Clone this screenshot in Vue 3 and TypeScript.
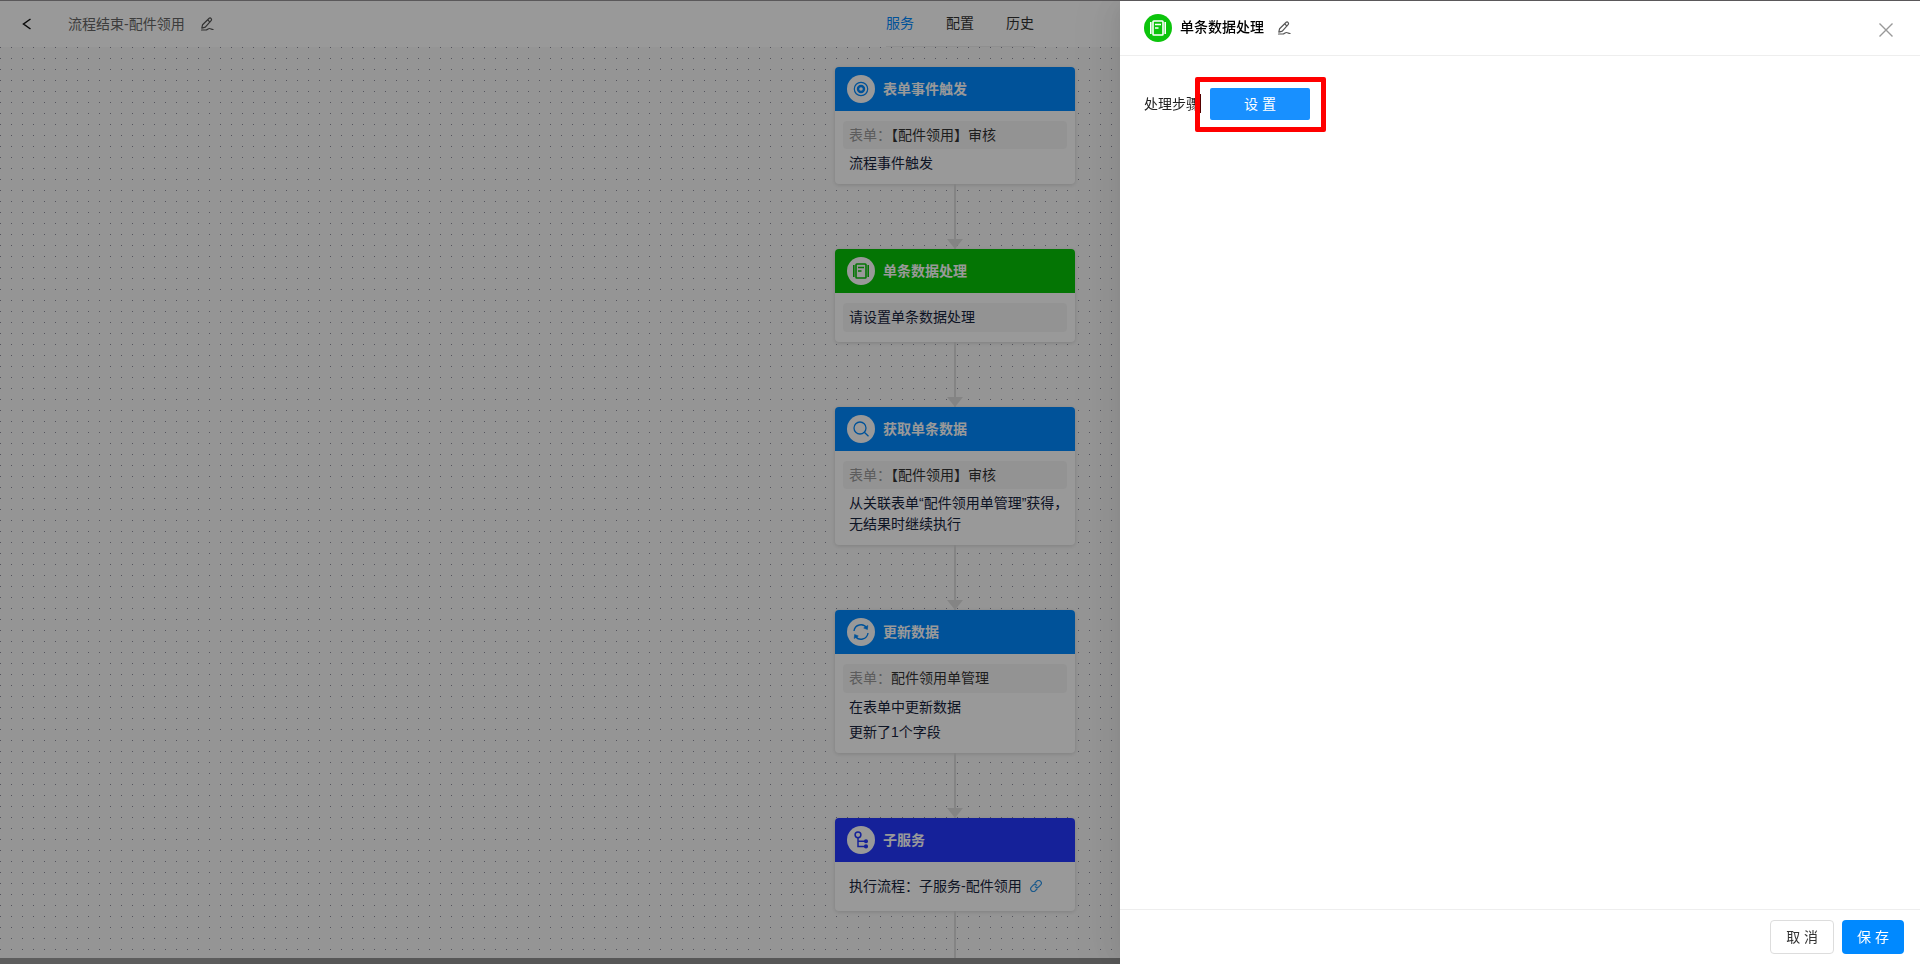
<script setup lang="ts">
import { ref } from 'vue'

type IconName = 'target' | 'book' | 'search' | 'sync' | 'branch'

interface FlowNode {
  title: string
  icon: IconName
  tone: 'blue' | 'green' | 'indigo'
  form?: string
  compact?: boolean
  note?: string
  lines?: string[]
  flow?: string
}

const tabs = ['服务', '配置', '历史']
const activeTab = ref('服务')
const drawerOpen = ref(true)

const nodes: FlowNode[] = [
  { title: '表单事件触发', icon: 'target', tone: 'blue', form: '【配件领用】审核', compact: true, lines: ['流程事件触发'] },
  { title: '单条数据处理', icon: 'book', tone: 'green', note: '请设置单条数据处理' },
  { title: '获取单条数据', icon: 'search', tone: 'blue', form: '【配件领用】审核', compact: true, lines: ['从关联表单“配件领用单管理”获得，\n无结果时继续执行'] },
  { title: '更新数据', icon: 'sync', tone: 'blue', form: '配件领用单管理', lines: ['在表单中更新数据', '更新了1个字段'] },
  { title: '子服务', icon: 'branch', tone: 'indigo', flow: '子服务-配件领用' },
]
</script>

<template>
  <div class="page">
    <header class="topbar">
      <div class="crumb">
        <button class="icon-btn back" aria-label="返回">
          <svg width="10" height="12" viewBox="0 0 10 12"><path d="M8.5 1 1.5 6l7 5" fill="none" stroke="currentColor" stroke-width="1.5" /></svg>
        </button>
        <span class="flow-name">流程结束-配件领用</span>
        <button class="icon-btn" aria-label="重命名">
          <svg width="14" height="14" viewBox="0 0 14 14" fill="none" stroke="currentColor" stroke-width="1.2" stroke-linecap="round" stroke-linejoin="round">
            <path d="M9.2 1.2a1.2 1.2 0 0 1 1.7.2l.4.5a1.2 1.2 0 0 1-.2 1.7L5.3 10.2 1.8 11.2 2.6 7.7zM7.7 2.7l2.1 2.5M1.5 13h4.300c1.500 0 2.200-1.500 3.700-1.500 1.400 0 1.800 1 3.600 1" />
          </svg>
        </button>
      </div>
      <nav class="tabs">
        <button v-for="tab in tabs" :key="tab" class="tab" :class="{ active: tab === activeTab }" @click="activeTab = tab">{{ tab }}</button>
      </nav>
      <div></div>
    </header>

    <main class="canvas">
      <div class="flow">
        <template v-for="(node, index) in nodes" :key="node.title">
          <div v-if="index > 0" class="link"><i class="arrow"></i></div>
          <section class="card">
            <h3 class="card-head" :class="node.tone">
              <span class="badge">
                <svg v-if="node.icon === 'target'" width="16" height="16" viewBox="0 0 16 16" fill="none" stroke="currentColor">
                  <circle cx="8" cy="8" r="6.7" stroke-width="1.2" /><circle cx="8" cy="8" r="3" stroke-width="2.4" />
                </svg>
                <svg v-else-if="node.icon === 'book'" width="16" height="16" viewBox="0 0 16 16" fill="none" stroke="currentColor">
                  <path d="M.8 2v12M15.2 2v12" stroke-width="1.600" /><rect x="3" y="1" width="10" height="14" rx=".8" stroke-width="1.600" /><path d="M5 4.500h6M5 8h3.500" stroke-width="1.300" />
                </svg>
                <svg v-else-if="node.icon === 'search'" width="16" height="16" viewBox="0 0 16 16" fill="none" stroke="currentColor" stroke-width="1.3">
                  <circle cx="7" cy="7" r="6" /><path d="m11.3 11.3 4.2 4" />
                </svg>
                <svg v-else-if="node.icon === 'sync'" width="18" height="18" viewBox="0 0 18 18" fill="none" stroke="currentColor" stroke-width="1.4">
                  <path d="M2 8a7 7 0 0 1 12.8-3M16 10a7 7 0 0 1-12.8 3" /><path d="m15.800 2.500-.4 4-3.700-1.500zM2.200 15.500l.4-4 3.700 1.500z" fill="currentColor" stroke-width=".6" />
                </svg>
                <svg v-else width="16" height="18" viewBox="0 0 16 18" fill="none" stroke="currentColor" stroke-width="1.5">
                  <circle cx="5" cy="3.8" r="2.9" /><path d="M5 6.7v8.7h7M5 10.3h7" /><circle cx="13" cy="10.3" r="1.3" fill="currentColor" /><circle cx="13" cy="15.4" r="1.3" fill="currentColor" />
                </svg>
              </span>
              {{ node.title }}
            </h3>
            <div class="card-body">
              <p v-if="node.form" class="row tinted" :class="{ compact: node.compact }"><span class="key">表单：</span>{{ node.form }}</p>
              <p v-if="node.note" class="row tinted ink">{{ node.note }}</p>
              <p v-for="line in node.lines" :key="line" class="line">{{ line }}</p>
              <p v-if="node.flow" class="row ink">
                执行流程：{{ node.flow }}
                <a href="#" class="open" aria-label="打开子服务">
                  <svg width="12" height="12" viewBox="0 0 12 12" fill="none" stroke="currentColor" stroke-width="1.2" stroke-linecap="round">
                    <path d="M5 3 6.8 1.2a2.5 2.5 0 0 1 3.8.2 2.5 2.5 0 0 1 0 3.5L8.8 6.800a2.500 2.500 0 0 1-3.500 0M7 9l-1.800 1.800a2.500 2.500 0 0 1-3.800-.2 2.500 2.500 0 0 1 0-3.500L3.200 5.200a2.500 2.500 0 0 1 3.500 0" />
                  </svg>
                </a>
              </p>
            </div>
          </section>
        </template>
        <div class="link tail"></div>
      </div>
    </main>
    <div class="scroll-strip"><div class="thumb"></div></div>
  </div>

  <template v-if="drawerOpen">
    <div class="mask"></div>
    <aside class="drawer" role="dialog" aria-labelledby="drawer-title">
      <header class="drawer-head">
        <span class="badge solid">
          <svg width="16" height="16" viewBox="0 0 16 16" fill="none" stroke="currentColor">
            <path d="M.8 2v12M15.2 2v12" stroke-width="1.6" /><rect x="3" y="1" width="10" height="14" rx=".8" stroke-width="1.6" /><path d="M5 4.5h6M5 8h3.5" stroke-width="1.3" />
          </svg>
        </span>
        <h2 id="drawer-title">单条数据处理</h2>
        <button class="icon-btn rename" aria-label="重命名">
          <svg width="14" height="14" viewBox="0 0 14 14" fill="none" stroke="currentColor" stroke-width="1.2" stroke-linecap="round" stroke-linejoin="round">
            <path d="M9.2 1.2a1.2 1.2 0 0 1 1.7.2l.4.5a1.2 1.2 0 0 1-.2 1.7L5.3 10.2 1.8 11.2 2.6 7.7zM7.7 2.7l2.1 2.5M1.5 13h4.3c1.500 0 2.200-1.500 3.700-1.500 1.400 0 1.800 1 3.600 1" />
          </svg>
        </button>
        <button class="icon-btn close" aria-label="关闭" @click="drawerOpen = false">
          <svg width="14" height="14" viewBox="0 0 14 14"><path d="m.5.5 13 13m0-13-13 13" fill="none" stroke="currentColor" stroke-width="1.4" /></svg>
        </button>
      </header>
      <div class="drawer-body">
        <label for="step-setup">处理步骤</label>
        <div class="setup">
          <button id="step-setup" class="set-btn">设 置</button>
          <span class="marker"></span>
        </div>
      </div>
      <footer class="drawer-foot">
        <button class="btn">取 消</button>
        <button class="btn primary">保 存</button>
      </footer>
    </aside>
  </template>
  <div class="window-edge"></div>
</template>

<style>
body {
  margin: 0;
  overflow: hidden;
}
</style>

<style scoped>
.page,
.drawer {
  font-family: "Liberation Sans", "Noto Sans CJK SC", sans-serif;
  font-size: 14px;
  line-height: 21px;
  box-sizing: border-box;
}
.page {
  display: flex;
  flex-direction: column;
  height: 100vh;
  padding-top: 1px;
  background: #fff;
}
button {
  font: inherit;
  cursor: pointer;
}
.icon-btn {
  display: flex;
  padding: 0;
  border: 0;
  background: none;
  color: #555;
}
.topbar {
  display: grid;
  grid-template-columns: 1fr auto 1fr;
  flex: none;
  height: 46px;
}
.crumb {
  display: flex;
  align-items: center;
  padding-left: 22px;
}
.crumb .back {
  margin-right: 36px;
  color: #111;
}
.flow-name {
  margin-right: 15px;
  color: #666;
}
.tabs {
  display: flex;
  gap: 32px;
  border-bottom: 1px solid #eee;
  box-sizing: border-box;
}
.tab {
  padding: 0;
  border: 0;
  background: none;
  color: #333;
}
.tab.active {
  color: #0089ff;
}
.canvas {
  flex: 1;
  min-height: 0;
  overflow: hidden;
  background: #f9f9f9 conic-gradient(from 270deg at 1px 1px, #8c8c9c 90deg, transparent 0) 0 0 / 11px 11px;
}
.flow {
  display: flex;
  flex-direction: column;
  align-items: center;
  height: 100%;
  padding-top: 20px;
  padding-right: 10px;
  box-sizing: border-box;
}
.card {
  flex: none;
  width: 240px;
  border-radius: 4px;
  background: #fff;
  box-shadow: 0 1px 4px rgba(0, 0, 0, 0.15);
}
.card-head {
  display: flex;
  align-items: center;
  gap: 8px;
  height: 44px;
  margin: 0;
  padding: 0 12px;
  box-sizing: border-box;
  border-radius: 4px 4px 0 0;
  color: #fff;
  font-size: 14px;
  font-weight: 700;
}
.badge {
  display: flex;
  align-items: center;
  justify-content: center;
  width: 28px;
  height: 28px;
  border-radius: 50%;
  background: #fff;
}
.blue {
  background: #0089ff;
}
.green {
  background: #07c307;
}
.indigo {
  background: #2338ff;
}
.blue .badge {
  color: #0089ff;
}
.green .badge {
  color: #07c307;
}
.indigo .badge {
  color: #2338ff;
}
.card-body {
  display: flex;
  flex-direction: column;
  gap: 4px;
  padding: 10px 8px;
}
.row,
.line {
  margin: 0;
  padding: 0 6px;
  white-space: nowrap;
  color: #333;
}
.row {
  padding: 4px 6px;
}
.row.compact {
  line-height: 20px;
}
.tinted {
  border-radius: 4px;
  background: #f6f6f6;
}
.line,
.ink {
  color: #17233d;
}
.line {
  white-space: pre;
}
.key {
  color: #999;
}
.open {
  margin-left: 4px;
  color: #2f96e8;
}
.open svg {
  vertical-align: -1px;
}
.link {
  position: relative;
  flex: none;
  width: 2px;
  height: 65px;
  background: #dcdcdc;
}
.link.tail {
  flex: 1;
}
.arrow {
  position: absolute;
  bottom: 0;
  left: -7px;
  border: 8px solid transparent;
  border-top: 10px solid #dcdcdc;
  border-bottom: 0;
}
.scroll-strip {
  flex: none;
  height: 6px;
  background: #919191;
}
.thumb {
  width: 220px;
  height: 100%;
  background: #9b9b9b;
}
.mask {
  position: fixed;
  inset: 0;
  background: rgba(0, 0, 0, 0.4);
}
.window-edge {
  position: fixed;
  inset: 0 0 auto;
  height: 1px;
  background: #5a585a;
}
.drawer {
  position: fixed;
  top: 0;
  right: 0;
  bottom: 0;
  display: flex;
  flex-direction: column;
  width: 800px;
  max-width: 100%;
  background: #fff;
  box-shadow: -6px 0 16px -8px rgba(0, 0, 0, 0.08), -9px 0 28px rgba(0, 0, 0, 0.05), -12px 0 48px 16px rgba(0, 0, 0, 0.03);
}
.drawer-head {
  display: flex;
  align-items: center;
  height: 56px;
  padding: 0 27px 0 24px;
  box-sizing: border-box;
  border-bottom: 1px solid #eee;
}
.badge.solid {
  background: #0cc40c;
  color: #fff;
}
h2 {
  margin: 0 13px 0 8px;
  color: #000;
  font-size: 14px;
  font-weight: 500;
}
.close {
  margin-left: auto;
  padding-top: 4px;
  color: #999;
}
.drawer-body {
  display: flex;
  flex: 1;
  align-items: flex-start;
  padding: 32px 24px;
  line-height: 32px;
  color: #222;
}
.setup {
  position: relative;
  margin-left: 10px;
}
.set-btn {
  display: block;
  width: 100px;
  height: 32px;
  padding: 0;
  border: 0;
  border-radius: 2px;
  background: #1890ff;
  color: #fff;
}
.marker {
  position: absolute;
  inset: -11px -16px -12px -15px;
  border: 5px solid #f00;
  border-radius: 2px;
  pointer-events: none;
}
.marker::before {
  content: "";
  position: absolute;
  top: 12px;
  left: 0;
  width: 1px;
  height: 19px;
  background: #500;
}
.drawer-foot {
  display: flex;
  justify-content: flex-end;
  gap: 8px;
  padding: 10px 16px;
  border-top: 1px solid #eee;
}
.btn {
  height: 34px;
  padding: 0 15px;
  border: 1px solid #ddd;
  border-radius: 4px;
  background: #fff;
  color: #333;
}
.btn.primary {
  border: 0;
  background: #0089ff;
  color: #fff;
}
</style>
